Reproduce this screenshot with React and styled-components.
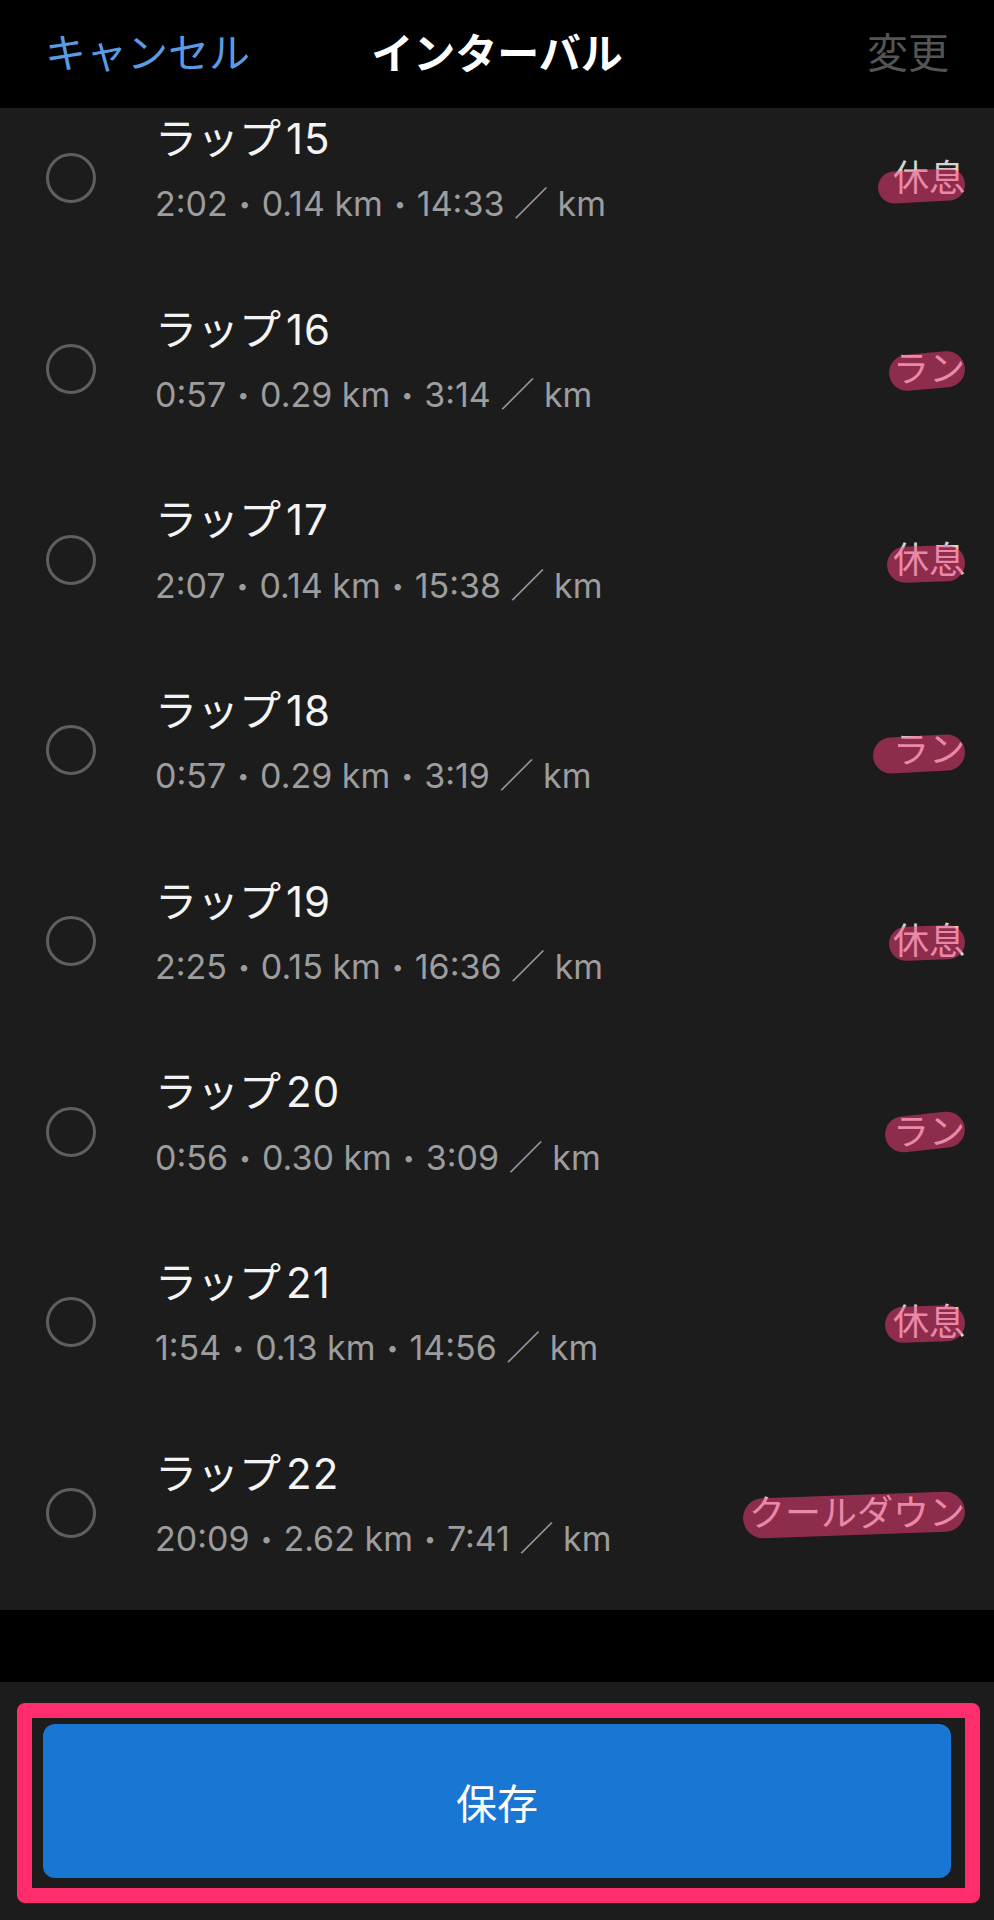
import React from 'react';
import styled, { createGlobalStyle } from 'styled-components';

const GlobalStyle = createGlobalStyle`
  body {
    margin: 0;
    background: #000;
  }
`;

const SANS = `"Inter", "Noto Sans CJK JP", sans-serif`;

const laps = [
  { n: 15, time: '2:02', dist: '0.14', pace: '14:33', tag: '休息', pill: { l: 15, dy: 8, h: 32, rot: -3 } },
  { n: 16, time: '0:57', dist: '0.29', pace: '3:14', tag: 'ラン', pill: { l: 4, dy: 2, h: 36, rot: -5 } },
  { n: 17, time: '2:07', dist: '0.14', pace: '15:38', tag: '休息', pill: { l: 6, dy: 4, h: 36, rot: -2 } },
  { n: 18, time: '0:57', dist: '0.29', pace: '3:19', tag: 'ラン', pill: { l: 20, dy: 4, h: 36, rot: -3 } },
  { n: 19, time: '2:25', dist: '0.15', pace: '16:36', tag: '休息', pill: { l: 4, dy: 2, h: 34, rot: -2 } },
  { n: 20, time: '0:56', dist: '0.30', pace: '3:09', tag: 'ラン', pill: { l: 8, dy: 0, h: 36, rot: -6 } },
  { n: 21, time: '1:54', dist: '0.13', pace: '14:56', tag: '休息', pill: { l: 8, dy: 2, h: 36, rot: -2 } },
  { n: 22, time: '20:09', dist: '2.62', pace: '7:41', tag: 'クールダウン', pill: { l: 6, dy: 2, h: 40, rot: -2 } },
];

const Screen = styled.div`
  width: 994px;
  height: 1920px;
  display: flex;
  flex-direction: column;
  background: #000;
  font-family: ${SANS};
  overflow: hidden;
`;

const Header = styled.header`
  height: 108px;
  flex-shrink: 0;
  display: grid;
  grid-template-columns: 1fr auto 1fr;
  align-items: center;
  padding: 0 45px;
  background: #000;
`;

const NavButton = styled.span`
  font-size: 41px;
  color: ${p => (p.disabled ? '#545454' : '#5b9be4')};
  justify-self: ${p => (p.end ? 'end' : 'start')};
  margin-top: -8px;
`;

const Title = styled.h1`
  margin: -8px 0 0;
  font-size: 42px;
  font-weight: 700;
  color: #fff;
`;

const Viewport = styled.div`
  height: 1502px;
  flex-shrink: 0;
  overflow: hidden;
  background: #1c1c1d;
`;

const List = styled.ul`
  list-style: none;
  margin: -25px 0 0;
  padding: 0;
`;

const Row = styled.li`
  height: 190.7px;
  display: flex;
  align-items: center;
  padding: 0 29px 0 46px;
`;

const Radio = styled.span`
  width: 44px;
  height: 44px;
  border-radius: 50%;
  border: 3px solid #5f5f60;
  flex-shrink: 0;
  margin-right: 59px;
`;

const Texts = styled.div`
  flex: 1;
  display: flex;
  flex-direction: column;
  gap: 18px;
  margin-top: -18px;
`;

const LapName = styled.div`
  font-size: 42px;
  color: #f4f4f4;
  line-height: 1.25;
`;

const LapNumber = styled.span`
  margin-left: 5px;
  letter-spacing: 1px;
`;

const Stats = styled.div`
  font-size: 34px;
  color: #9d9d9e;
  line-height: 1.25;
`;

const Dot = styled.span`
  display: inline-block;
  font-size: 0.6em;
  margin: 0 0.55em;
  vertical-align: 0.25em;
`;

const Tag = styled.span`
  position: relative;
  font-size: 36px;
  color: #d4d4d4;
  line-height: 1;

  &::after {
    content: '';
    position: absolute;
    left: ${p => -p.$pill.l}px;
    right: 0;
    top: 50%;
    height: ${p => p.$pill.h}px;
    margin-top: ${p => p.$pill.dy - p.$pill.h / 2}px;
    border-radius: ${p => p.$pill.h / 2}px;
    background: rgba(255, 60, 124, 0.5);
    transform: rotate(${p => p.$pill.rot}deg);
  }
`;

const Gap = styled.div`
  height: 72px;
  flex-shrink: 0;
  background: #000;
`;

const Footer = styled.footer`
  flex: 1;
  position: relative;
  background: #1c1c1d;
  padding: 42px 43px;
  display: flex;
`;

const SaveButton = styled.button`
  flex: 1;
  border: none;
  border-radius: 12px;
  background: #1a76d3;
  color: #fff;
  font-family: ${SANS};
  font-size: 41px;
`;

const Highlight = styled.div`
  position: absolute;
  left: 17px;
  top: 21px;
  width: 963px;
  height: 200px;
  box-sizing: border-box;
  border: 15px solid #ff2d6c;
  border-radius: 8px;
  pointer-events: none;
`;

export default function App() {
  return (
    <>
      <GlobalStyle />
      <Screen>
        <Header>
          <NavButton>キャンセル</NavButton>
          <Title>インターバル</Title>
          <NavButton end disabled>変更</NavButton>
        </Header>
        <Viewport>
          <List>
            {laps.map(l => (
              <Row key={l.n}>
                <Radio />
                <Texts>
                  <LapName>ラップ<LapNumber>{l.n}</LapNumber></LapName>
                  <Stats>
                    {l.time}<Dot>•</Dot>{l.dist} km<Dot>•</Dot>{l.pace} ／ km
                  </Stats>
                </Texts>
                <Tag $pill={l.pill}>{l.tag}</Tag>
              </Row>
            ))}
          </List>
        </Viewport>
        <Gap />
        <Footer>
          <SaveButton>保存</SaveButton>
          <Highlight />
        </Footer>
      </Screen>
    </>
  );
}
